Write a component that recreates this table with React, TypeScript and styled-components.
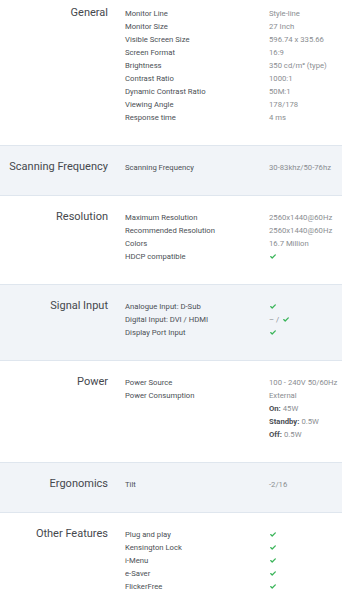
import React from "react";
import styled, { createGlobalStyle } from "styled-components";

const Global = createGlobalStyle`
  html, body { margin: 0; padding: 0; background: #fff; }
  body { font-family: Roboto, "Liberation Sans", Arial, sans-serif; overflow: hidden; }
`;

const Page = styled.div`
  width: 342px;
  display: flex;
  flex-direction: column;
`;

const Section = styled.section<{ $band?: boolean; $first?: boolean }>`
  display: grid;
  grid-template-columns: 108px 1fr;
  column-gap: 17px;
  padding: ${(p) => (p.$first ? "7px" : "15px")} 0 21px 0;
  background: ${(p) => (p.$band ? "#f1f4f8" : "#ffffff")};
  border-top: ${(p) => (p.$band ? "1px solid #dfe6ee" : "none")};
  border-bottom: ${(p) => (p.$band ? "1px solid #dfe6ee" : "none")};
`;

const Title = styled.h3`
  margin: -1px 0 0 0;
  text-align: right;
  font-size: 11px;
  font-weight: 400;
  color: #45484d;
  line-height: 13px;
  white-space: nowrap;
`;

const Rows = styled.div`
  display: flex;
  flex-direction: column;
`;

const Row = styled.div`
  display: grid;
  grid-template-columns: 144px 1fr;
  height: 13px;
  align-items: center;
  font-size: 7.7px;
  line-height: 13px;
`;

const Name = styled.span`
  color: #4b4f55;
  white-space: nowrap;
`;

const Value = styled.span`
  color: #8a8d91;
  white-space: nowrap;
  display: flex;
  align-items: center;
  b { color: #4b4f55; font-weight: 700; margin-right: 2px; }
`;

const CheckIcon = styled.svg`
  display: block;
  margin-left: 1px;
`;

const Check = () => (
  <CheckIcon width="6" height="5" viewBox="0 0 6 5">
    <path d="M0.7 2.6 L2.2 4 L5.3 0.9" stroke="#3bb55a" strokeWidth="1.3" fill="none" strokeLinecap="round" strokeLinejoin="round" />
  </CheckIcon>
);

const Dash = styled.span`
  margin-right: 3px;
`;

type Item = [string, React.ReactNode];
type Group = { title: string; band?: boolean; rows: Item[] };

const ck = <Check />;

const groups: Group[] = [
  {
    title: "General",
    rows: [
      ["Monitor Line", "Style-line"],
      ["Monitor Size", "27 Inch"],
      ["Visible Screen Size", "596.74 x 335.66"],
      ["Screen Format", "16:9"],
      ["Brightness", "350 cd/m² (type)"],
      ["Contrast Ratio", "1000:1"],
      ["Dynamic Contrast Ratio", "50M:1"],
      ["Viewing Angle", "178/178"],
      ["Response time", "4 ms"],
    ],
  },
  { title: "Scanning Frequency", band: true, rows: [["Scanning Frequency", "30-83khz/50-76hz"]] },
  {
    title: "Resolution",
    rows: [
      ["Maximum Resolution", "2560x1440@60Hz"],
      ["Recommended Resolution", "2560x1440@60Hz"],
      ["Colors", "16.7 Million"],
      ["HDCP compatible", ck],
    ],
  },
  {
    title: "Signal Input",
    band: true,
    rows: [
      ["Analogue Input: D-Sub", ck],
      ["Digital Input: DVI / HDMI", <><Dash>– /</Dash>{ck}</>],
      ["Display Port Input", ck],
    ],
  },
  {
    title: "Power",
    rows: [
      ["Power Source", "100 - 240V 50/60Hz"],
      ["Power Consumption", "External"],
      ["", <><b>On:</b>45W</>],
      ["", <><b>Standby:</b>0.5W</>],
      ["", <><b>Off:</b>0.5W</>],
    ],
  },
  { title: "Ergonomics", band: true, rows: [["Tilt", "-2/16"]] },
  {
    title: "Other Features",
    rows: [
      ["Plug and play", ck],
      ["Kensington Lock", ck],
      ["i-Menu", ck],
      ["e-Saver", ck],
      ["FlickerFree", ck],
    ],
  },
];

export default function App() {
  return (
    <Page>
      <Global />
      {groups.map((g, i) => (
        <Section key={g.title} $band={g.band} $first={i === 0}>
          <Title>{g.title}</Title>
          <Rows>
            {g.rows.map(([n, v], j) => (
              <Row key={j}>
                <Name>{n}</Name>
                <Value>{v}</Value>
              </Row>
            ))}
          </Rows>
        </Section>
      ))}
    </Page>
  );
}
